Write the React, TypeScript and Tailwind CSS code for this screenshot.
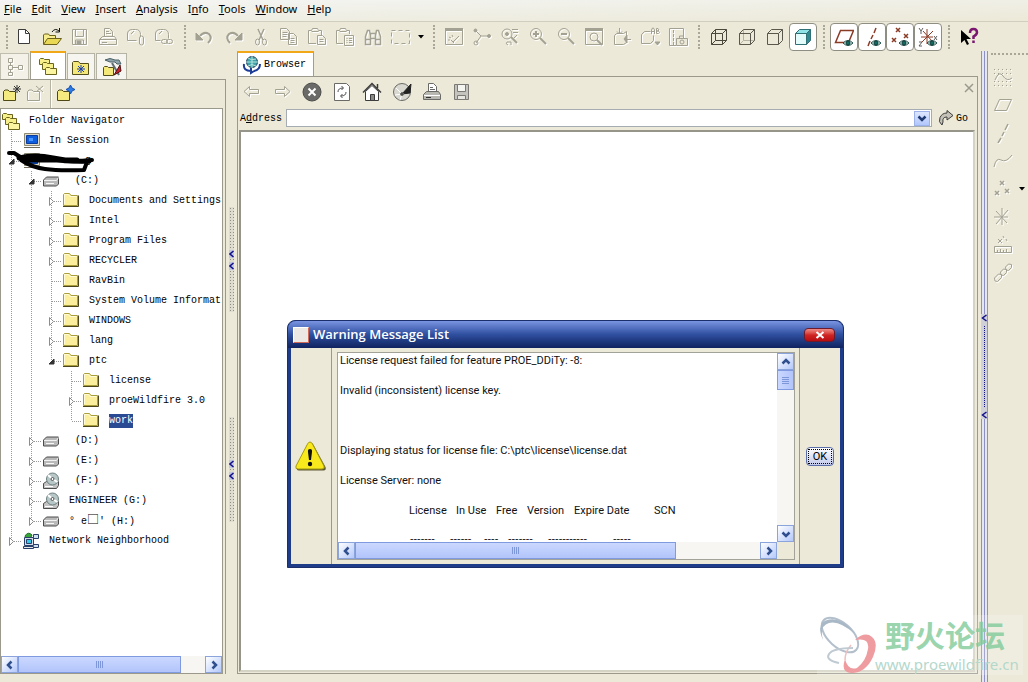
import React, { useState } from 'react';

interface IconProps {
    children: React.ReactNode;
    stroke?: string;
    className?: string;
}

const Icon: React.FC<IconProps> = ({ children, stroke = '#a3a192', className = '' }) => (
    <svg viewBox="0 0 20 20" fill="none" stroke={stroke} className={`h-5 w-5 shrink-0 ${className}`} aria-hidden="true">
        {children}
    </svg>
);

const Dim: React.FC<{ children: React.ReactNode }> = ({ children }) => (
    <Icon className="drop-shadow-[1px_1px_0_#ffffff]">{children}</Icon>
);

const smallFolder = 'M1.5 14.5v-9l1.500-1.500h3l1.500 1.500h6v9z';

const FolderStack = () => (
    <Icon stroke="#6b641c">
        <path d="M1.500 8.500v-5l1-1h3l1 1h5v5z" fill="#f7ef8a" />
        <path d="M4.500 13.500v-6l1-1h3l1 1h6v6z" fill="#f7ef8a" />
        <path d="M7.500 18.500v-6l1-1h3l1 1h6v6z" fill="#fbf4a0" />
    </Icon>
);

const FolderIcon = () => (
    <Icon stroke="#a89e3c">
        <path d="M2.500 14.500v-11l1-1h5l1.500 2h6.500v10z" fill="#fbee9c" />
        <path d="M3.500 13v-9.500h4l1.500 2h6.500" stroke="#fffbd8" />
        <path d="M2 15.500h15.500v-11" stroke="#4a451c" />
    </Icon>
);

const DriveIcon = () => (
    <Icon stroke="#4c4c4c">
        <path d="M2.500 9l3-3h12v7l-2 2h-13z" fill="#b9b9b9" />
        <path d="M3 9.500h12.500l2-3" stroke="#f2f2f2" />
        <path d="M5 12.500h8" stroke="#f8f8f8" />
    </Icon>
);

const DiscIcon = () => (
    <Icon stroke="#4c4c4c">
        <path d="M2.500 12.500l3-2h12v4l-2 3h-13z" fill="#c4c4c4" />
        <circle cx="11.500" cy="8" r="6" fill="#b7c6c6" stroke="#6d7f80" />
        <path d="M11.500 8L7 4M11.500 8l5 3" stroke="#ffffff" strokeWidth="2" />
        <circle cx="11.500" cy="8" r="1.500" fill="#ffffff" />
        <path d="M4 15.500h8" stroke="#ffffff" />
    </Icon>
);

const MonitorIcon = () => (
    <Icon stroke="#8c8874">
        <path d="M3.500 2.500h15v12h-15z" fill="#dedac6" />
        <path d="M5.500 4.500h11v8h-11z" fill="#0f5ee0" stroke="#0b3c9c" />
        <path d="M8 7h4v3H8z" fill="#4b95ff" stroke="none" />
        <path d="M3 16.500h16" stroke="#6f6b58" />
    </Icon>
);

const NetworkIcon = () => (
    <Icon stroke="#28406a">
        <path d="M12.500 3.500h5v4h-5zM10.500 13.500h7v3h-7z" fill="#cfe0f0" />
        <path d="M4 5q3-5 7-1l-2 4H5z" fill="#35a53a" stroke="#1d7325" />
        <path d="M3.500 6.500h9v8h-9z" fill="#d4dde8" />
        <path d="M5.500 8.500h5v4h-5z" fill="#35c8ea" />
        <path d="M2.500 15.500h10v2h-10z" fill="#e6e6e6" />
    </Icon>
);

const Eye = () => (
    <>
        <path d="M9 16q5-5 10 0q-5 5-10 0z" fill="#c7ded8" stroke="#1b4c48" />
        <circle cx="14" cy="16" r="2" fill="#0f6a60" stroke="#123a38" />
    </>
);

const fileTools: [string, React.ReactNode][] = [
    ['New', <Icon stroke="#3c3c3c"><path d="M4.500 2.500h7l4 4v10h-11z" fill="#ffffff" /><path d="M11.500 2.500v4h4" /></Icon>],
    ['Open', <Icon stroke="#6b611a"><path d="M1.500 17V8l1-1h4l1 1.500h6V11" fill="#f6ec8e" /><path d="M1.500 17.500l4-6h14l-4.500 6z" fill="#e9d855" /><path d="M10 5q3-4.500 7-1M17.500 1v4h-4" stroke="#111111" /></Icon>],
    ['Save', <Dim><path d="M2.500 2.500h14v15h-14zM5.500 2.500v7h8v-7M5.500 17v-4h8v4" /><path d="M7 14h4v3H7z" fill="#a3a192" /></Dim>],
    ['Print', <Dim><path d="M6.500 9V1.500h5l3 3V9M8 4.500h3M8 6.500h5M1.500 12.500l3-3h12l2 3zM1.500 12.500v5h17v-5M4 15.500h5" /></Dim>],
    ['Send', <Dim><path d="M1.500 13.500V7q0-4.500 5-4.500h3q5 0 5 5v2M1.500 13.500h9M5 7l3-3" /><path d="M13.500 17v-6q0-2 2-2t2 2v5q0 2-2 2t-2-2z" /></Dim>],
    ['Send link', <Dim><path d="M1.500 13.500V7q0-4.500 5-4.500h3q5 0 5 5v4M1.500 13.500h5M5 7l3-3" /><rect x="7.500" y="12.500" width="6" height="4" rx="2" /><rect x="12.500" y="12.500" width="6" height="4" rx="2" /></Dim>],
];

const editTools: [string, React.ReactNode][] = [
    ['Undo', <Dim><path d="M5 9q4-5 9-2q4 4-1 9" strokeWidth="2" /><path d="M1 6v7h7z" fill="#a3a192" /></Dim>],
    ['Redo', <Dim><path d="M15 9q-4-5-9-2q-4 4 1 9" strokeWidth="2" /><path d="M19 6v7h-7z" fill="#a3a192" /></Dim>],
    ['Cut', <Dim><path d="M7 2l5 11M13 2L8 13" strokeWidth="1.500" /><ellipse cx="6.500" cy="15" rx="2" ry="3" /><ellipse cx="13.500" cy="15" rx="2" ry="3" /></Dim>],
    ['Copy', <Dim><path d="M1.500 1.500h6l3 3v8h-9zM3.500 5.500h5M3.500 7.500h5M3.500 9.500h4M9.500 6.500h5l3 3v8h-8zM11.500 11.500h4M11.500 13.500h4M11.500 15.500h4" /></Dim>],
    ['Paste', <Dim><path d="M9 16.500H1.500v-13h3l1-2h5l1 2h3V8M4.500 4.500h7M10.500 8.500h5l3 3v6h-8zM12.500 12.500h4M12.500 14.500h4" /></Dim>],
    ['Paste special', <Dim><path d="M8 16.500H1.500v-13h3l1-2h5l1 2h3V7M4.500 4.500h7M9.500 8.500h9v10h-9zM11.500 11.500h1M14 11.500h3M11.500 13.500h1M14 13.500h3M11.500 15.500h1M14 15.500h3" /></Dim>],
    ['Find', <Dim><path d="M2.500 17.500v-8l2-6h2l1 5v9zM12.500 17.500v-9l1-5h2l2 6v8zM7.500 6.500h5v5h-5zM2.500 12.500h5M12.500 12.500h5" strokeWidth="1.500" /></Dim>],
    ['Select', <Dim><path d="M.5 3.500h18v13h-18z" strokeDasharray="4 3" /></Dim>],
];

const viewTools: [string, React.ReactNode][] = [
    ['Repaint', <Dim><path d="M1.500 1.500h17v16h-17z" /><path d="M1 2.500h18" strokeWidth="3" /><path d="M9 15l6-6M7 13l3 3M5 10l2 1M8 8l1 2M4 13h2" /></Dim>],
    ['Spin center', <Dim><path d="M4 4l5 5h7M9 9l-5 7" /><circle cx="3.500" cy="3.500" r="1.500" fill="#a3a192" /><circle cx="17" cy="9" r="1.500" fill="#a3a192" /><circle cx="4" cy="16" r="2" /></Dim>],
    ['Orient mode', <Dim><circle cx="7" cy="7" r="5" /><circle cx="7" cy="7" r="1.500" fill="#a3a192" /><path d="M11 10l6 6" strokeWidth="2" /><path d="M12 2.500h6M13 5.500h5M17 8l-3 3M8 18q-3-1-1-3h4v3" /></Dim>],
    ['Zoom in', <Dim><circle cx="8" cy="7" r="5.500" /><path d="M12 11l6 6" strokeWidth="2" /><path d="M5 7h6M8 4v6" strokeWidth="2" /></Dim>],
    ['Zoom out', <Dim><circle cx="8" cy="7" r="5.500" /><path d="M12 11l6 6" strokeWidth="2" /><path d="M5 7h6" strokeWidth="2" /></Dim>],
    ['Refit', <Dim><path d="M1.500 1.500h17v16h-17z" /><path d="M1 2.500h18" strokeWidth="3" /><circle cx="10" cy="10" r="4" /><path d="M13 13l5 5" strokeWidth="2" /></Dim>],
    ['Reorient', <Dim><path d="M2.500 17.500v-9l2-2h7l3-2v11l-3 2zM7.500 1v6M5 4.500l2.500 2.500L10 4.500M19 12.500h-6" /><path d="M12 12l3-4v8z" fill="#a3a192" /></Dim>],
    ['Saved views', <Dim><path d="M1.500 16.500v-9l3-3h6M1.500 16.500h9l3-3v-5M11.500 7V3l1-2h1l1 2v4M11.500 4.500h3M16.500 1.500v5h2l1-1-1-1.500h-2 1.500l1-1-1-1.500z" /><path d="M15 15h5l-2.500 3z" fill="#a3a192" /></Dim>],
    ['Layers', <Dim><path d="M8 18.500H1.500v-17h14V9" /><path d="M5.500 3v15" strokeDasharray="3 1" /><path d="M8.500 11.500h11v7h-11zM11.500 11v-2h4v2" fill="#ece9d8" /><circle cx="14" cy="15" r="2" /></Dim>],
];

const cube = 'M2.500 6.500h11v11h-11zM2.500 6.500l4-4h11v11l-4 4M13.500 6.500l4-4';

const displayTools: [string, React.ReactNode][] = [
    ['Wireframe', <Icon stroke="#4a483c"><path d={cube} /><path d="M6.500 2.500v11h11M6.500 13.500l-4 4" /></Icon>],
    ['Hidden line', <Icon stroke="#5a584c"><path d="M6.500 2.500v11h11M6.500 13.500l-4 4" stroke="#b5b3a4" /><path d={cube} /></Icon>],
    ['No hidden', <Icon stroke="#5a584c"><path d={cube} /></Icon>],
];

const red = '#8a3b26';

const datumTools: [string, React.ReactNode][] = [
    ['Datum planes', <Icon stroke={red}><path d="M1.500 15.500l5-12h13l-5 12z" strokeWidth="1.500" /><Eye /></Icon>],
    ['Datum axes', <Icon stroke={red}><path d="M14 1l-2 5M11 8l-2 4M8 14l-2 5" strokeWidth="1.500" /><Eye /></Icon>],
    ['Datum points', <Icon stroke={red}><path d="M6 1l4 4M10 1l-4 4M14 7l4 4M18 7l-4 4M2 11l4 4M6 11l-4 4" strokeWidth="1.500" /><Eye /></Icon>],
    ['Coordinate systems', <Icon stroke={red}><path d="M9 2v15M3 10h12M4 15L15 4M5 4l9 10" /><path d="M1 1l2 3 2-3M3 4v3M16 9l3 4M19 9l-3 4M1 15h3l-3 4h3" stroke="#5e5e5e" /><Eye /></Icon>],
];

const sideTools: [string, React.ReactNode][] = [
    ['Sketch', <Dim><path d="M1 2.500h18M1 6.500h18M1 14.500h18M1 18.500h18" strokeDasharray="1 3" /><path d="M2 13q4-10 8-4t9 2" /></Dim>],
    ['Plane', <Dim><path d="M1.500 15.500l5-11h12l-5 11z" /></Dim>],
    ['Axis', <Dim><path d="M15 1l-3 6M11 9l-2 4M8 15l-3 5" strokeWidth="1.500" /></Dim>],
    ['Curve', <Dim><path d="M1 16q2-10 7-7t11-5" /></Dim>],
    ['Point', <Dim><path d="M7 2l4 4M11 2L7 6M2 12l4 4M6 12l-4 4M12 10l4 4M16 10l-4 4" strokeWidth="1.500" /></Dim>],
    ['Coordinate system', <Dim><path d="M9 1v17M1 10h14M3 17L15 3M3 4l11 12" /></Dim>],
    ['Analysis', <Dim><path d="M5 4l4 4M9 4L5 8M10 1l1 2M13 4l1 2M1.500 11.500h17v6h-17zM4.500 15v2M7.500 14v3M10.500 15v2M13.500 14v3" /></Dim>],
    ['Reference', <Dim><path d="M2 18l-.500-3 4-4 3 .500 0 3-4 4zM8 12l-.500-3 3-3 3 .500 0 3-3 3zM13 7l-.500-3 3-3 3 .500 0 3-3 3z" /></Dim>],
];

const browserTools: [string, React.ReactNode][] = [
    ['Back', <Dim><path d="M2 9.500l5.500-5v3h9v4h-9v3z" /></Dim>],
    ['Forward', <Dim><path d="M18 9.500l-5.500-5v3h-9v4h9v3z" /></Dim>],
    ['Stop', <Icon stroke="#4c4c4c"><circle cx="10" cy="10" r="9" fill="#6a6a68" /><path d="M6.500 6.500l7 7M13.500 6.500l-7 7" stroke="#ffffff" strokeWidth="2" /></Icon>],
    ['Refresh', <Icon stroke="#6a6a66"><path d="M2.500 1.500h12l3 3v14h-15z" fill="#ffffff" /><path d="M6 10q0-4 5-4M9.500 4l2 2-2 2M14 10q0 4-5 4M10.500 12l-2 2 2 2" stroke="#4f4f4f" /></Icon>],
    ['Home', <Icon stroke="#3c3c3c"><path d="M3.500 18.500v-9l6.500-6 6.500 6v9z" fill="#ffffff" /><path d="M1 10.500l9-9 9 9M15.500 6V2" strokeWidth="1.500" /><path d="M8.500 18.500v-6h4v6z" fill="#8a8a86" /></Icon>],
    ['Search', <Icon stroke="#6a6a66"><circle cx="10" cy="10" r="8.500" fill="#d8d7d0" /><path d="M10 12L19 2l-1 9z" fill="#222222" stroke="#222222" /><path d="M10 12L4 6M10 12l-7 1M10 12l-2 6" stroke="#ffffff" /><circle cx="10" cy="12" r="1.500" fill="#444444" /></Icon>],
    ['Print page', <Icon stroke="#6a6a66"><path d="M6.500 10V1.500h5l3 3V10z" fill="#ffffff" /><path d="M8 5.500h3M8 7.500h5" /><path d="M1.500 12.500l3-3h12l2 3v5h-17z" fill="#b8b7b0" /><path d="M2 13.500h16" stroke="#ffffff" /><path d="M4 15.500h5" stroke="#333333" /></Icon>],
    ['Save page', <Icon stroke="#7a7974"><path d="M2.500 2.500h14v15h-14z" fill="#c4c3be" /><path d="M5.500 2.500h8v7h-8z" fill="#f4f4f0" /><path d="M5.500 13.500h8v4h-8z" fill="#e6e5e0" /></Icon>],
];

const ToolGroup: React.FC<{ tools: [string, React.ReactNode][]; pressed?: boolean }> = ({ tools, pressed }) => (
    <div className="flex">
        {tools.map(([name, icon]) => (
            <button
                key={name}
                title={name}
                aria-label={name}
                className={pressed ? 'flex h-7 w-7 items-center justify-center rounded border border-[#8f8e82] bg-white' : 'flex h-7 w-7 items-center justify-center'}
            >
                {icon}
            </button>
        ))}
    </div>
);

const Grip = () => (
    <div className="flex w-[13px] shrink-0 justify-center">
        <div className="h-6 border-l-2 border-dotted border-[#a9a798]" />
    </div>
);

const Caret = () => (
    <svg viewBox="0 0 6 4" className="h-1 w-1.5" aria-hidden="true">
        <path d="M0 0h6L3 3.500z" fill="#000000" />
    </svg>
);

const menus = [
    ['', 'F', 'ile'],
    ['', 'E', 'dit'],
    ['', 'V', 'iew'],
    ['', 'I', 'nsert'],
    ['', 'A', 'nalysis'],
    ['I', 'n', 'fo'],
    ['', 'T', 'ools'],
    ['', 'W', 'indow'],
    ['', 'H', 'elp'],
];

const arrows = {
    left: 'M6.500 1.500L3 5l3.500 3.500',
    right: 'M3.500 1.500L7 5 3.500 8.500',
    up: 'M1.500 6.500L5 3l3.500 3.500',
    down: 'M1.500 3.500L5 7l3.500-3.500',
};

const ScrollButton: React.FC<{ dir: keyof typeof arrows }> = ({ dir }) => (
    <button
        aria-label={`Scroll ${dir}`}
        className="flex h-[17px] w-[17px] shrink-0 items-center justify-center border border-[#8ba4dc] bg-linear-to-br from-white to-[#b4c8fb]"
    >
        <svg viewBox="0 0 10 10" fill="none" stroke="#2f4f8f" strokeWidth="2.500" className="h-2.5 w-2.5">
            <path d={arrows[dir]} />
        </svg>
    </button>
);

const HScroll: React.FC<{ thumb: string }> = ({ thumb }) => (
    <div className="flex h-[17px] bg-[#f7f6f2]">
        <ScrollButton dir="left" />
        <div className="flex-1">
            <div className={`flex h-full items-center justify-center gap-px border border-[#7f9adf] bg-linear-to-b from-[#cbd8ff] to-[#b2c4fa] ${thumb}`}>
                {[0, 1, 2, 3].map((i) => (
                    <span key={i} className="h-[7px] w-px bg-[#7d97d8]" />
                ))}
            </div>
        </div>
        <ScrollButton dir="right" />
    </div>
);

interface TreeRow {
    label: string;
    icon: React.ReactNode;
    // one character per column: guide line, gap, or the node's own joint
    cols: string;
}

// cols: | guide, space for none, + collapsed, - expanded, t leaf, L last leaf, e last expanded, c last collapsed
const rows: TreeRow[] = [
    { label: 'Folder Navigator', icon: <FolderStack />, cols: '' },
    { label: 'In Session', icon: <MonitorIcon />, cols: 't' },
    { label: '      g', icon: <MonitorIcon />, cols: '-' },
    { label: ' (C:)', icon: <DriveIcon />, cols: '|-' },
    { label: 'Documents and Settings', icon: <FolderIcon />, cols: '||+' },
    { label: 'Intel', icon: <FolderIcon />, cols: '||+' },
    { label: 'Program Files', icon: <FolderIcon />, cols: '||+' },
    { label: 'RECYCLER', icon: <FolderIcon />, cols: '||+' },
    { label: 'RavBin', icon: <FolderIcon />, cols: '||t' },
    { label: 'System Volume Informat', icon: <FolderIcon />, cols: '||t' },
    { label: 'WINDOWS', icon: <FolderIcon />, cols: '||+' },
    { label: 'lang', icon: <FolderIcon />, cols: '||+' },
    { label: 'ptc', icon: <FolderIcon />, cols: '||e' },
    { label: 'license', icon: <FolderIcon />, cols: '|| t' },
    { label: 'proeWildfire 3.0', icon: <FolderIcon />, cols: '|| +' },
    { label: 'work', icon: <FolderIcon />, cols: '|| L' },
    { label: ' (D:)', icon: <DriveIcon />, cols: '|+' },
    { label: ' (E:)', icon: <DriveIcon />, cols: '|+' },
    { label: ' (F:)', icon: <DiscIcon />, cols: '|+' },
    { label: 'ENGINEER (G:)', icon: <DiscIcon />, cols: '|+' },
    { label: '° e□′ (H:)', icon: <DriveIcon />, cols: '|c' },
    { label: 'Network Neighborhood', icon: <NetworkIcon />, cols: 'c' },
];

const Joint: React.FC<{ kind: string }> = ({ kind }) => (
    <svg viewBox="0 0 20 20" className="h-5 w-5 shrink-0" fill="none" stroke="#9a9a9a" aria-hidden="true">
        {kind !== ' ' && <path d={'Lec'.includes(kind) ? 'M10.500 0v10' : 'M10.500 0v20'} strokeDasharray="1 1" />}
        {!'| '.includes(kind) && <path d="M11 10.500h9" strokeDasharray="1 1" />}
        {'+c'.includes(kind) && <path d="M8.500 6.500l4 4-4 4z" fill="#ffffff" stroke="#8c8c8c" />}
        {'-e'.includes(kind) && <path d="M13 8v5H8z" fill="#333333" stroke="#333333" />}
    </svg>
);

const Tree = () => {
    const [selected, setSelected] = useState('work');

    return (
        <ul className="relative flex-1 overflow-hidden pt-0.5" role="tree" aria-label="Folder Navigator">
            {rows.map((row) => (
                <li key={row.label} role="treeitem" aria-selected={row.label === selected} className="flex h-5 items-center">
                    {row.cols.split('').map((kind, i) => (
                        <Joint key={i} kind={kind} />
                    ))}
                    {row.icon}
                    <button
                        onClick={() => setSelected(row.label)}
                        className={row.label === selected ? 'ml-2 bg-[#2b4a94] leading-[14px] whitespace-pre text-white' : 'ml-2 leading-[14px] whitespace-pre'}
                    >
                        {row.label.split('□').map((part, i) => (
                            <React.Fragment key={i}>
                                {i > 0 && <span className="font-['Noto_Sans_CJK_SC',sans-serif] text-xs leading-none">□</span>}
                                {part}
                            </React.Fragment>
                        ))}
                    </button>
                </li>
            ))}
            {/* marker strokes over the machine name */}
            <li role="presentation" className="absolute top-10 left-1">
                <svg viewBox="0 0 90 28" className="h-7 w-[90px]" fill="none" stroke="#000000" strokeLinecap="round" strokeLinejoin="round" aria-hidden="true">
                    <path d="M4 4h5l8 5q20-1 35 2t35 0" strokeWidth="4" />
                    <path d="M14 9q16-4 34 0t36 3M20 11h52" strokeWidth="5" />
                    <path d="M16 11q10 7 24 9t39 1l3-8" strokeWidth="4" />
                </svg>
            </li>
        </ul>
    );
};

const Starburst: React.FC<{ color: string; x: number; y: number }> = ({ color, x, y }) => (
    <path transform={`translate(${x} ${y})`} d="M0-4v8M-4 0h8M-3-3l6 6M3-3l-6 6" stroke={color} />
);

const NavigatorPane = () => (
    <aside className="flex w-[226px] shrink-0 flex-col">
        <div className="flex h-7 items-end gap-px" role="tablist">
            <button role="tab" aria-label="Model tree" className="flex h-[26px] w-[29px] items-center justify-center border border-b-0 border-[#c0beae] bg-[#f3f1e8]">
                <Dim><path d="M3.500 1.500h4v4h-4zM3.500 8.500h4v4h-4zM3.500 15.500h4v3h-4zM13.500 8.500h4v4h-4zM5.500 5v3M5.500 12v3M7.500 10.500h6" /></Dim>
            </button>
            <button role="tab" aria-selected="true" aria-label="Folder browser" className="flex h-7 w-9 items-center justify-center border border-t-2 border-b-0 border-[#9f9e92] border-t-[#f0a818] bg-white">
                <FolderStack />
            </button>
            <button role="tab" aria-label="Favorites" className="flex h-[26px] w-7 items-center justify-center border border-b-0 border-[#b5b3a4] bg-[#f6f5ef]">
                <Icon stroke="#55501a">
                    <path d="M1.500 17.500v-12l1-1h5l1.500 2h8.500v11z" fill="#f5e87a" />
                    <Starburst color="#1b3fae" x={10} y={12} />
                </Icon>
            </button>
            <button role="tab" aria-label="Connections" className="flex h-[26px] w-[31px] items-center justify-center border border-b-0 border-[#b5b3a4] bg-[#f6f5ef]">
                <Icon stroke="#55501a">
                    <path d="M3 3q5-3 10 0h4l2 4h-4l-2-2H8z" fill="#90a6ac" stroke="#4b6268" />
                    <path d="M10 6l7 12" stroke="#5f6f75" strokeWidth="2" />
                    <path d="M1.500 18.500v-8l1-1h3l1 1h5v8z" fill="#f5e87a" />
                    <path d="M12 18l6-10 1 6z" fill="#c8202c" stroke="#4c1010" />
                </Icon>
            </button>
        </div>
        <div className="mb-2 flex flex-1 flex-col border-t border-r border-[#9a998c]">
            <div className="flex h-7 items-center">
                <button aria-label="New folder" className="flex w-6 justify-center">
                    <Icon stroke="#4d4814"><path transform="translate(0 2)" d={smallFolder} fill="#f5ea80" /><Starburst color="#333333" x={15} y={5} /></Icon>
                </button>
                <button aria-label="Delete folder" className="flex w-6 justify-center">
                    <Dim><path transform="translate(0 2)" d={smallFolder} /><path d="M10 2l7 6M17 2l-7 6" /></Dim>
                </button>
                <span className="mx-0.5 h-full border-r border-l border-r-white border-l-[#b5b3a4]" />
                <button aria-label="Add to favorites" className="flex w-6 justify-center">
                    <Icon stroke="#4d4814"><path transform="translate(0 2)" d={smallFolder} fill="#f5ea80" /><path d="M14.500 1l1.500 3 3 1.500-3 1.500-1.500 3L13 7l-3-1.500L13 4z" fill="#2d7de8" stroke="#174fae" /></Icon>
                </button>
            </div>
            <div className="mr-0.5 flex flex-1 flex-col border border-[#9a998c] bg-white">
                <Tree />
                <HScroll thumb="mr-6" />
            </div>
        </div>
    </aside>
);

const SashThumb = () => (
    <div className="flex h-[105px] w-[5px] flex-col items-center justify-center gap-1 bg-[#dddccf] bg-[radial-gradient(#8e8d80_1px,transparent_1px)] bg-size-[3px_3px]">
        {[0, 1].map((i) => (
            <svg key={i} viewBox="0 0 5 8" fill="none" stroke="#10108c" strokeWidth="1.500" className="h-2 w-[5px] bg-[#c2c6e0]" aria-hidden="true">
                <path d="M4.500 1L1 4l3.500 3" />
            </svg>
        ))}
    </div>
);

const SashArrow = () => (
    <svg viewBox="0 0 6 8" fill="none" stroke="#10108c" strokeWidth="1.500" className="h-2 w-1.5" aria-hidden="true">
        <path d="M5.500 1L1.500 4l4 3" />
    </svg>
);

const SashLines = () => (
    <div className="flex flex-1 justify-between bg-[#e6e7ee]">
        <span className="w-px bg-[#8d90c4]" />
        <span className="w-px bg-[#8d90c4]" />
        <span className="w-px bg-[#8d90c4]" />
    </div>
);

const BrowserPane = () => {
    const [address, setAddress] = useState('');

    return (
        <main className="flex min-w-0 flex-1 flex-col">
            <div className="flex h-[25px]" role="tablist">
                <button role="tab" aria-selected="true" className="flex w-[77px] items-center gap-0.5 border border-t-2 border-b-0 border-[#9f9e92] border-t-[#f0a818] bg-white pl-1">
                    <Icon stroke="#27405f">
                        <path d="M2 9q-1 7 7 7M18 9q0 6-6 7M9 13v5l3-2" stroke="#1c3c96" strokeWidth="2" />
                        <circle cx="10" cy="7" r="5.500" fill="#3fa3a8" />
                        <path d="M6 3q3 3 8 1M4 7h12M10 1v12M6 11q4-3 8 0" stroke="#b8e3dc" />
                    </Icon>
                    Browser
                </button>
            </div>
            <div className="mb-2 flex flex-1 flex-col border border-[#9a998c] pr-px">
                <div className="flex h-[30px] items-center">
                    {browserTools.map(([name, icon]) => (
                        <button key={name} title={name} aria-label={name} className="flex w-[30px] justify-center pr-0.5">
                            {icon}
                        </button>
                    ))}
                    <button aria-label="Close" className="mb-2 ml-auto w-3">
                        <svg viewBox="0 0 10 10" stroke="#9a998c" strokeWidth="1.500" className="h-2.5 w-2.5">
                            <path d="M1 1l8 8M9 1L1 9" />
                        </svg>
                    </button>
                </div>
                <form className="flex h-[22px] items-center pl-0.5" onSubmit={(e) => e.preventDefault()}>
                    <label htmlFor="address" className="mr-1">
                        A<u>d</u>dress
                    </label>
                    <div className="flex h-[18px] flex-1 items-center border border-[#a5acb2] bg-white">
                        <input
                            id="address"
                            type="text"
                            value={address}
                            onChange={(e) => setAddress(e.target.value)}
                            className="h-full min-w-0 flex-1 px-1 outline-none"
                        />
                        <button type="button" aria-label="Recent addresses" className="mr-px flex h-[15px] w-4 items-center justify-center border border-[#9db2e8] bg-linear-to-b from-[#dde7ff] to-[#b1c6fa]">
                            <svg viewBox="0 0 10 10" fill="none" stroke="#1f3a72" strokeWidth="2.500" className="h-2.5 w-2.5">
                                <path d={arrows.down} />
                            </svg>
                        </button>
                    </div>
                    <button type="submit" className="mr-1 ml-1 flex w-9 items-center">
                        <Icon stroke="#3c3c3c">
                            <path d="M6 17Q2 14 4 9.500T11 5V2.500L17 7.500l-6 4.500V9Q6 9 7 14z" fill="#c4c2b8" />
                        </Icon>
                        Go
                    </button>
                </form>
                <div className="m-px flex-1 border-2 border-t-[#96958a] border-r-[#d5d3c4] border-b-[#d5d3c4] border-l-[#96958a] bg-white" />
            </div>
        </main>
    );
};

const licenseColumns: [string, string][] = [
    ['License', 'w-[47px]'],
    ['In Use', 'w-10'],
    ['Free', 'w-[31px]'],
    ['Version', 'w-[47px]'],
    ['Expire Date', 'w-20'],
    ['SCN', 'w-10'],
];

const WarningDialog = () => {
    const [open, setOpen] = useState(true);

    if (!open) {
        return null;
    }

    return (
        <section
            role="dialog"
            aria-labelledby="warning-title"
            className="absolute top-[320px] left-[287px] w-[557px] rounded-t-lg border border-[#1a2f6c] bg-[#1f3c88] font-['Roboto',sans-serif] text-[11px]"
        >
            <header className="flex h-[27px] items-center rounded-t-lg bg-linear-to-b from-[#7a95e2] via-[#2f4f9f] to-[#10235f] pr-2 pl-[5px]">
                <span className="mr-1 h-4 w-4 border border-t-white border-r-[#d06a58] border-b-[#d06a58] border-l-white bg-[#ece9e4]" />
                <h1 id="warning-title" className="flex-1 font-['Open_Sans',sans-serif] text-[13px] font-semibold text-white">
                    Warning Message List
                </h1>
                <button
                    onClick={() => setOpen(false)}
                    aria-label="Close dialog"
                    className="flex h-[14px] w-[31px] items-center justify-center rounded-sm border border-[#6c1a2c] bg-linear-to-b from-[#ee8a86] via-[#d02424] to-[#b80c10]"
                >
                    <svg viewBox="0 0 10 8" stroke="#ffffff" strokeWidth="2" className="h-2 w-2.5">
                        <path d="M1.500 1l7 6M8.500 1l-7 6" />
                    </svg>
                </button>
            </header>
            <div className="mx-[3px] mb-[3px] flex bg-[#ece9d8]">
                <div className="flex w-[41px] items-center justify-center border-r border-[#9a998c]">
                    <svg viewBox="0 0 32 32" className="h-8 w-8" aria-hidden="true">
                        <path d="M16 3q1.500 0 2.500 2L30.500 27q1 3.500-2 3.500H4q-3 0-2-3.500L13.500 5q1-2 2.500-2z" fill="#5b5835" />
                        <path d="M15 2q1.500 0 2.500 2L29 26q1 3-2 3H3q-3 0-2-3L12.500 4q1-2 2.500-2z" fill="#f8e81c" stroke="#a59a10" />
                        <path d="M15 9q2.500 0 2 3l-1 8h-2l-1-8q-.500-3 2-3z" fill="#111111" />
                        <circle cx="15" cy="24" r="2.200" fill="#111111" />
                    </svg>
                </div>
                <div className="flex-1 border-r border-[#9a998c] py-1 pr-1 pl-[5px]">
                    <div className="border border-[#a3a298]">
                        <div className="flex">
                            <div className="h-[189px] min-w-0 flex-1 overflow-hidden bg-white pl-0.5 leading-[15px] text-[#111111]">
                                <p>License request failed for feature PROE_DDiTy: -8:</p>
                                <p className="mt-[15px]">Invalid (inconsistent) license key.</p>
                                <p className="mt-[45px]">Displaying status for license file: C:\ptc\license\license.dat</p>
                                <p className="mt-[15px]">License Server: none</p>
                                <table className="mt-[15px] ml-[69px] table-fixed border-collapse">
                                    <thead>
                                        <tr>
                                            {licenseColumns.map(([name, width]) => (
                                                <th key={name} className={`${width} p-0 text-left font-normal whitespace-nowrap`}>
                                                    {name}
                                                </th>
                                            ))}
                                        </tr>
                                    </thead>
                                </table>
                                <p className="mt-3 ml-[70px] flex font-['Noto_Sans',sans-serif]">
                                    <span className="w-10">-------</span>
                                    <span className="w-[34px]">------</span>
                                    <span className="w-6">----</span>
                                    <span className="w-10">-------</span>
                                    <span className="w-[65px]">-----------</span>
                                    <span>-----</span>
                                </p>
                            </div>
                            <div className="flex w-[17px] flex-col bg-[#f7f6f2]">
                                <ScrollButton dir="up" />
                                <div className="flex-1">
                                    <div className="flex h-5 flex-col items-center justify-center gap-px border border-[#7f9adf] bg-linear-to-r from-[#cbd8ff] to-[#b2c4fa]">
                                        {[0, 1, 2, 3].map((i) => (
                                            <span key={i} className="h-px w-[7px] bg-[#7d97d8]" />
                                        ))}
                                    </div>
                                </div>
                                <ScrollButton dir="down" />
                            </div>
                        </div>
                        <div className="pr-[17px]">
                            <HScroll thumb="mr-[84px]" />
                        </div>
                    </div>
                </div>
                <div className="flex w-10 items-center justify-center">
                    <button
                        onClick={() => setOpen(false)}
                        className="h-[19px] w-7 rounded-sm border border-[#5c6ea8] bg-linear-to-b from-white to-[#c2c9ea] p-px leading-none"
                    >
                        <span className="flex h-full items-center justify-center border border-dotted border-black">OK</span>
                    </button>
                </div>
            </div>
        </section>
    );
};

const Watermark = () => (
    <div className="pointer-events-none absolute right-[5px] bottom-[7px] flex h-[60px] w-[206px] bg-white/20">
        <svg viewBox="0 0 60 60" className="h-[60px] w-[60px] shrink-0" fill="none" aria-hidden="true">
            <ellipse cx="23" cy="20" rx="12" ry="22" transform="rotate(-48 23 20)" stroke="#b3c0cc" strokeWidth="2" />
            <path d="M6 25Q-2 7 12 4.500T38 19Q22 5 12 8T6 25z" fill="#a9b8c7" />
            <path d="M38 25Q48 16 55 22T56 42Q49 57 36 58T28 44Q31 56 40 53Q49 46 51 34T38 25z" fill="#ee9ca0" />
            <path d="M28 45q0-8 6-15" stroke="#eec0c0" strokeWidth="1.500" />
            <path d="M36 33q-20 0-24 6t10 9" stroke="#bfcad3" strokeWidth="2" />
        </svg>
        <div className="flex flex-col gap-1">
            <span className="ml-2 font-['Noto_Sans_CJK_SC',sans-serif] text-[30px] leading-[38px] font-bold whitespace-nowrap text-[#7fca98]/80">野火论坛</span>
            <span className="-ml-0.5 font-['Noto_Sans',sans-serif] text-[15px] leading-[14px] whitespace-nowrap text-[#b4d8cc]">www.proewildfire.cn</span>
        </div>
    </div>
);

const App = () => (
    <div className="relative flex min-h-screen flex-col overflow-hidden bg-[#ece9d8] font-['Liberation_Mono','Noto_Sans_CJK_SC',monospace] text-[10px] text-black">
        <nav className="flex h-[22px] gap-2.5 border-b border-[#d0cebf] bg-linear-to-br from-[#f4f5f4] to-[#ece9d8] pl-1 font-['Noto_Sans',sans-serif] text-[11px]">
            {menus.map(([before, key, after]) => (
                <button key={key + after} className="h-[17px] leading-[17px]">
                    {before}
                    <u>{key}</u>
                    {after}
                </button>
            ))}
        </nav>
        <div className="flex h-[29px] items-center" role="toolbar">
            <div className="-mr-[3px] flex"><Grip /></div>
            <ToolGroup tools={fileTools} />
            <Grip />
            <ToolGroup tools={editTools} />
            <button aria-label="Select options" className="flex w-3 justify-center">
                <Caret />
            </button>
            <Grip />
            <ToolGroup tools={viewTools} />
            <Grip />
            <ToolGroup tools={displayTools} />
            <ToolGroup
                pressed
                tools={[['Shading', <Icon stroke="#2f7076"><path d="M2.500 6.500h11v11h-11z" fill="#e4fbfb" /><path d="M2.500 6.500l4-4h11l-4 4z" fill="#8fe3e6" /><path d="M13.500 6.500l4-4v11l-4 4z" fill="#2f8890" /></Icon>]]}
            />
            <Grip />
            <ToolGroup pressed tools={datumTools} />
            <Grip />
            <button aria-label="Context help" className="flex w-7 justify-center">
                <Icon>
                    <path d="M2 3v13l3.500-3L8 18l2-1-2.500-5H12z" fill="#000000" stroke="none" />
                    <path d="M11 6q0-4 3.500-4T18 5.500q0 2-3.500 4V12M14.500 13.500v2.500" stroke="#7a1670" strokeWidth="2.500" />
                </Icon>
            </button>
        </div>
        <div className="flex flex-1">
            <NavigatorPane />
            <div className="flex w-[11px] shrink-0 flex-col items-center gap-[105px] pt-[156px]">
                <SashThumb />
                <SashThumb />
            </div>
            <BrowserPane />
            <div className="mx-[3px] flex w-[7px] shrink-0 flex-col">
                <SashLines />
                <div className="flex h-[105px] flex-col items-center border-r border-[#8d90c4] bg-[#d0d0d8]">
                    <SashArrow />
                    <span className="my-1 flex-1 border-l border-dotted border-[#10108c]" />
                    <SashArrow />
                </div>
                <SashLines />
            </div>
            <div className="flex w-[37px] shrink-0 flex-col" role="toolbar" aria-label="Datum tools">
                <div className="mt-0.5 mb-2 border-t-2 border-dotted border-[#a9a798]" />
                {sideTools.map(([name, icon]) => (
                    <div key={name} className="flex h-7 items-center">
                        <button title={name} aria-label={name} className="flex w-6 justify-center">
                            {icon}
                        </button>
                        {name === 'Point' && (
                            <button aria-label="Point options" className="ml-1">
                                <Caret />
                            </button>
                        )}
                    </div>
                ))}
            </div>
        </div>
        <WarningDialog />
        <Watermark />
    </div>
);

export default App;
